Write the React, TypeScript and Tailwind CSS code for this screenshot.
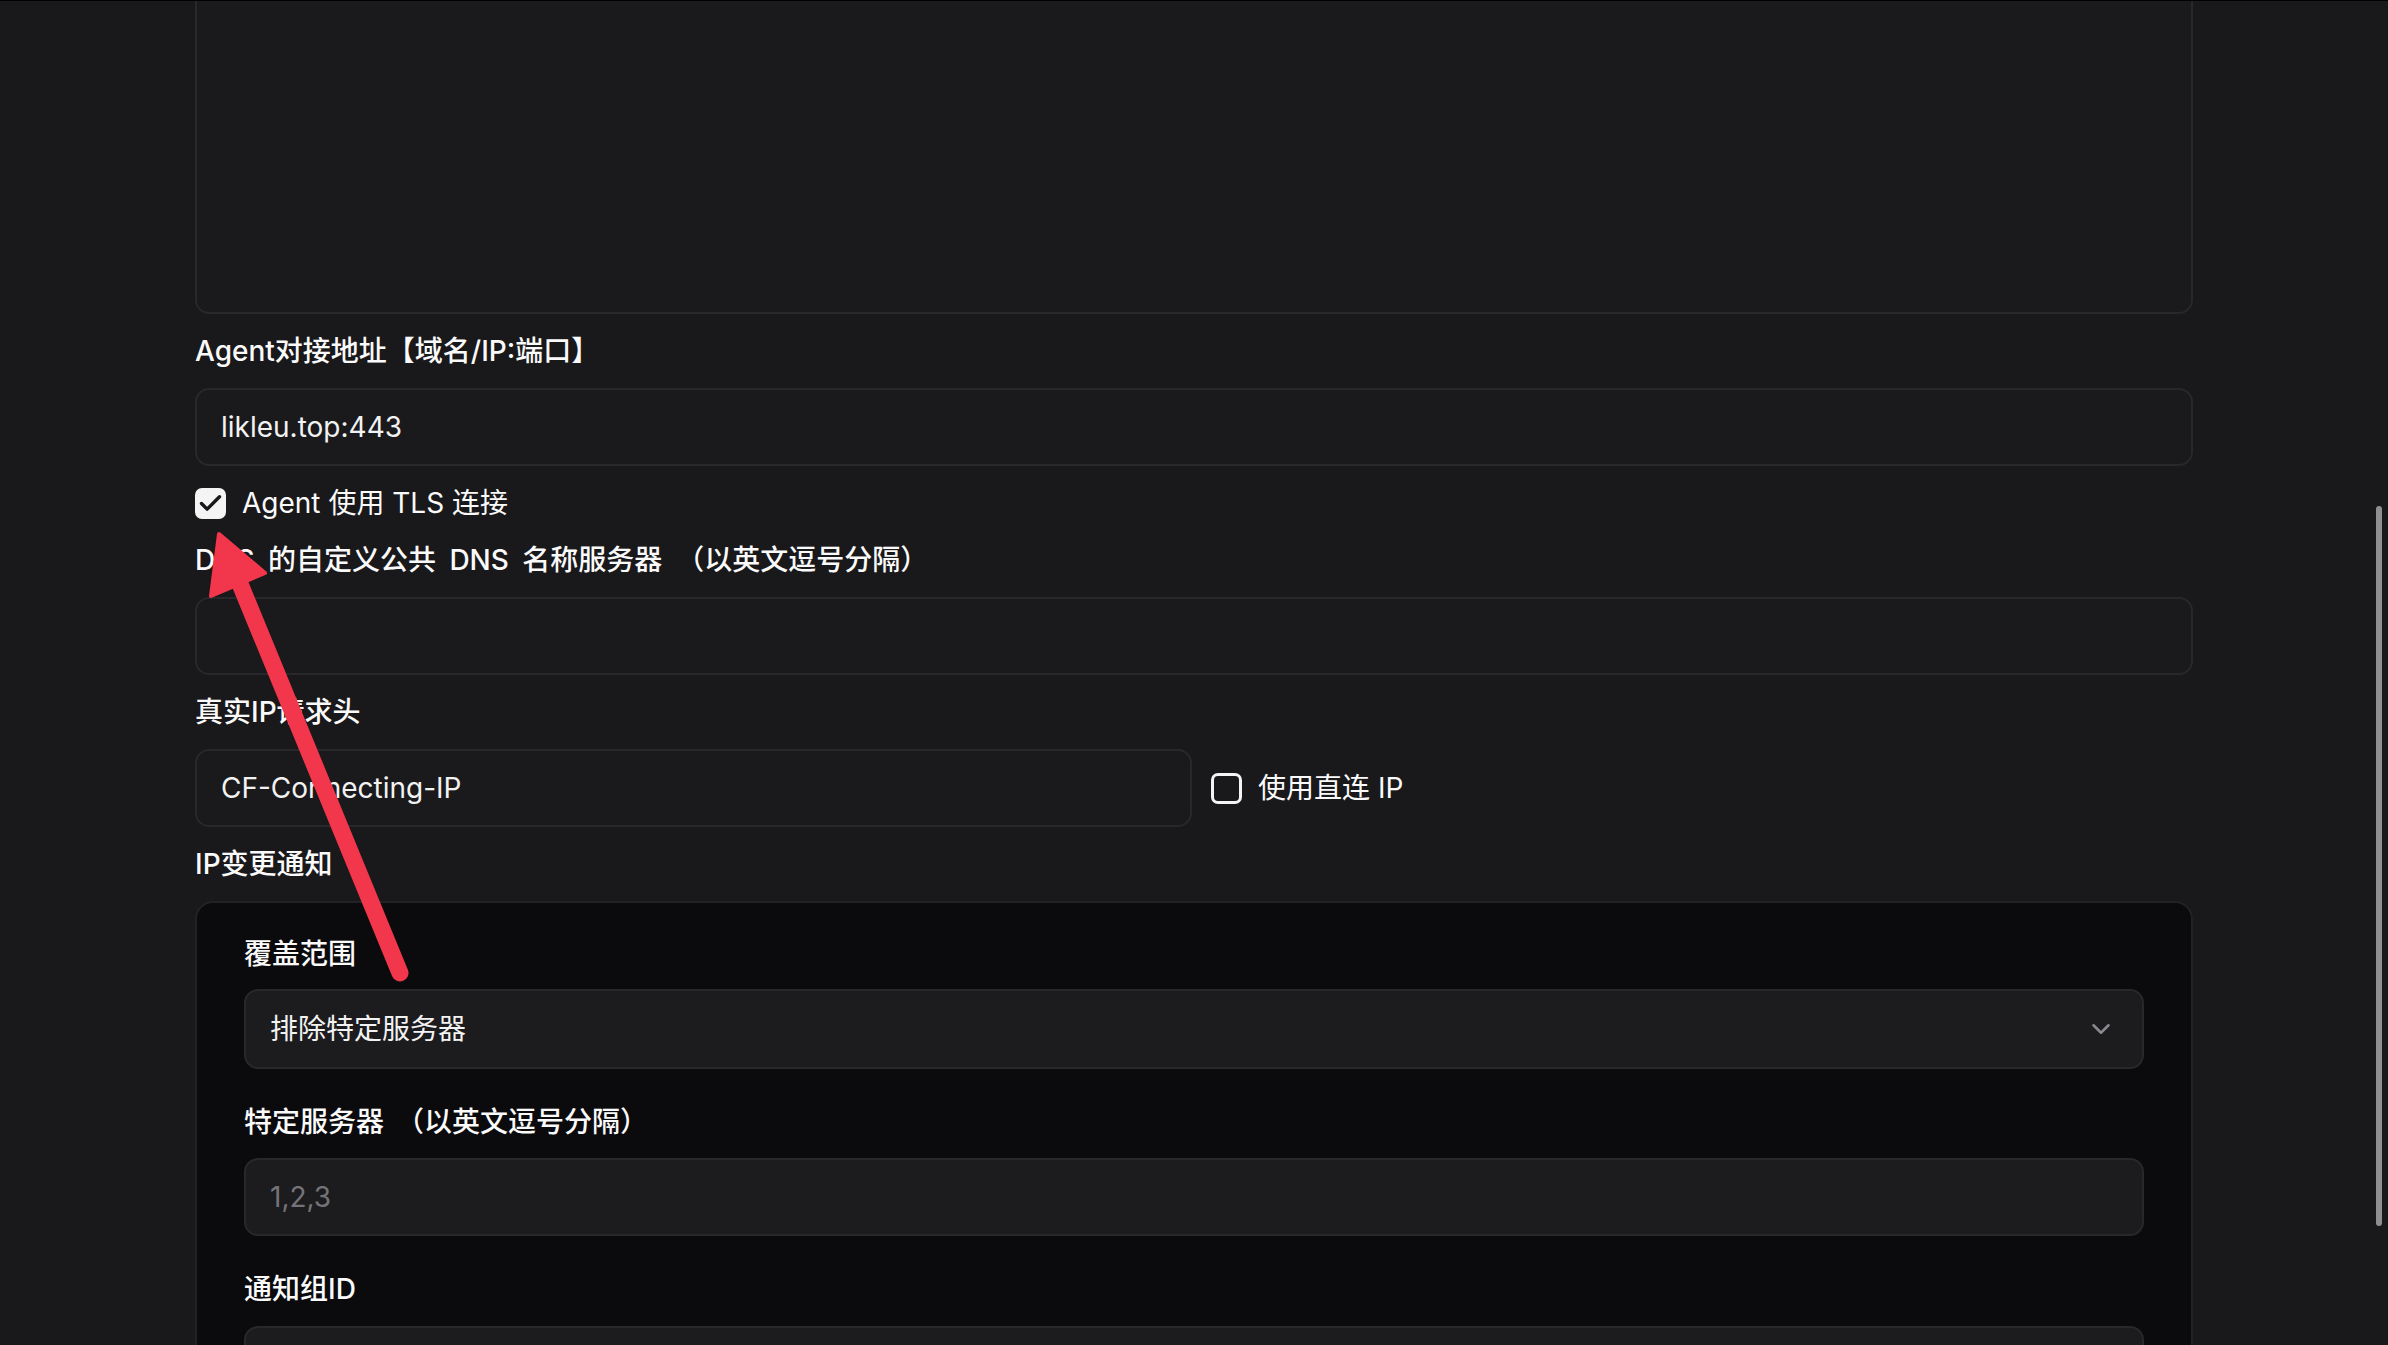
import { ChevronDown, Check } from "lucide-react";

function Label({ children }: { children: React.ReactNode }) {
  return <div className="text-[28px] leading-[40px] font-medium text-[#fafafa]">{children}</div>;
}

function Field({ value, placeholder, dark }: { value?: string; placeholder?: string; dark?: boolean }) {
  return (
    <div
      className={`h-[78px] rounded-[14px] border-2 border-[#28272b] px-[24px] flex items-center text-[28px] ${
        dark ? "bg-[#1c1b1e]" : "bg-[#1a191c]"
      }`}
    >
      {value ? <span className="text-[#f2f2f2]">{value}</span> : <span className="text-[#747478]">{placeholder}</span>}
    </div>
  );
}

function Checkbox({ checked }: { checked?: boolean }) {
  return checked ? (
    <div className="w-[31px] h-[31px] rounded-[7px] bg-[#f4f4f5] flex items-center justify-center">
      <Check size={27} strokeWidth={3} className="text-[#18181b]" />
    </div>
  ) : (
    <div className="w-[31px] h-[31px] rounded-[7px] border-[3px] border-[#f4f4f5]" />
  );
}

function App() {
  return (
    <div className="relative h-[1345px] overflow-hidden bg-[#19181b] border-t border-black font-['Inter','Noto_Sans_CJK_SC',sans-serif] text-[#fafafa]">
      <div className="ml-[195px] w-[1998px] flex flex-col gap-[17px]">
        <div className="h-[313px] rounded-b-[14px] border-2 border-t-0 border-[#28272b] bg-[#1a191c]" />
        <Label>Agent对接地址【域名/IP:端口】</Label>
        <Field value="likleu.top:443" />
        <div className="h-[40px] flex items-center gap-[16px]">
          <Checkbox checked />
          <span className="text-[28px]">Agent 使用 TLS 连接</span>
        </div>
        <Label>
          <span className="[word-spacing:6px]">DNS 的自定义公共 DNS 名称服务器</span>
          <span className="ml-[14px]">（以英文逗号分隔）</span>
        </Label>
        <Field />
        <Label>真实IP请求头</Label>
        <div className="flex items-center">
          <div className="w-[997px]">
            <Field value="CF-Connecting-IP" />
          </div>
          <div className="ml-[19px] flex items-center gap-[16px]">
            <Checkbox />
            <span className="text-[28px]">使用直连 IP</span>
          </div>
        </div>
        <Label>IP变更通知</Label>
        <div className="rounded-[18px] border-2 border-[#222125] bg-[#0b0a0d] pt-[31px] px-[47px] pb-[40px] flex flex-col gap-[33px]">
          <div className="flex flex-col gap-[15px]">
            <Label>覆盖范围</Label>
            <div className="h-[80px] rounded-[14px] border-2 border-[#28272b] bg-[#1c1b1e] pl-[24px] pr-[26px] flex items-center justify-between text-[28px]">
              <span className="text-[#f2f2f2]">排除特定服务器</span>
              <ChevronDown size={30} strokeWidth={2} className="text-[#8a898d]" />
            </div>
          </div>
          <div className="flex flex-col gap-[16px]">
            <Label>
              特定服务器<span className="ml-[12px]">（以英文逗号分隔）</span>
            </Label>
            <Field placeholder="1,2,3" dark />
          </div>
          <div className="flex flex-col gap-[17px]">
            <Label>通知组ID</Label>
            <Field dark />
          </div>
        </div>
      </div>

      <div className="absolute left-[2376px] top-[505px] w-[6px] h-[720px] rounded-full bg-[#8f8f90]" />

      <svg className="absolute left-0 top-0 pointer-events-none" width="2388" height="1345">
        <line x1="238" y1="578" x2="400" y2="972" stroke="#f2364b" strokeWidth="17" strokeLinecap="round" />
        <polygon points="219,533 211,595 265,572" fill="#f2364b" stroke="#f2364b" strokeWidth="4" strokeLinejoin="round" />
      </svg>
    </div>
  );
}

export default App;
